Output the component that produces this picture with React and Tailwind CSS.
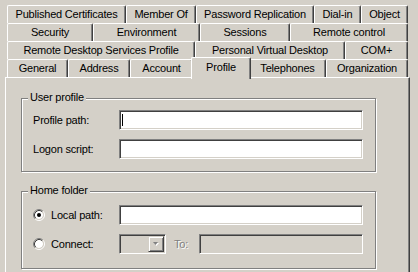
import React from 'react';

const rows = [
  [
    ['Published Certificates', 'w-[119px]'],
    ['Member Of', 'w-[70px]'],
    ['Password Replication', 'w-[118px]'],
    ['Dial-in', 'w-[47px]'],
    ['Object', 'w-[47px]'],
  ],
  [
    ['Security', 'w-[86px]'],
    ['Environment', 'w-[107px]'],
    ['Sessions', 'w-[90px]'],
    ['Remote control', 'w-[118px]'],
  ],
  [
    ['Remote Desktop Services Profile', 'w-[188px]'],
    ['Personal Virtual Desktop', 'w-[150px]'],
    ['COM+', 'w-[63px]'],
  ],
];

const Tab = ({ label, className }) => (
  <div
    className={`h-[18px] shrink-0 flex items-center justify-center border-t border-l border-white border-r border-r-[#404040] rounded-tl-[2px] rounded-tr-[2px] shadow-[inset_-1px_0_0_#808080] bg-[#d4d0c8] leading-[13px] ${className}`}
  >
    {label}
  </div>
);

const sunken =
  'border border-t-[#808080] border-l-[#808080] border-b-white border-r-white shadow-[inset_1px_1px_0_#404040,inset_-1px_-1px_0_#d4d0c8]';

const TextBox = ({ className = '', disabled, children }) => (
  <div className={`h-[20px] ${sunken} ${disabled ? 'bg-[#d4d0c8]' : 'bg-white'} relative ${className}`}>
    {children}
  </div>
);

const Radio = ({ checked }) => (
  <svg width="12" height="12" viewBox="0 0 12 12" className="shrink-0">
    <circle cx="6" cy="6" r="4" fill="#fff" />
    <path d="M2.11 9.89 A5.5 5.5 0 0 1 9.89 2.11" fill="none" stroke="#808080" />
    <path d="M9.89 2.11 A5.5 5.5 0 0 1 2.11 9.89" fill="none" stroke="#fff" />
    <path d="M2.82 9.18 A4.5 4.5 0 0 1 9.18 2.82" fill="none" stroke="#404040" />
    <path d="M9.18 2.82 A4.5 4.5 0 0 1 2.82 9.18" fill="none" stroke="#d4d0c8" />
    {checked && <circle cx="6" cy="6" r="2" fill="#000" />}
  </svg>
);

const Group = ({ title, className, children }) => (
  <div
    className={`relative w-[355px] border border-[#808080] shadow-[inset_1px_1px_0_#fff,1px_1px_0_#fff] pl-[11px] flex flex-col gap-[9px] ${className}`}
  >
    <span className="absolute left-[6px] -top-[8px] px-[2px] bg-[#d4d0c8] leading-[13px]">{title}</span>
    {children}
  </div>
);

export default function App() {
  return (
    <div className="w-[418px] h-[272px] overflow-hidden bg-[#d4d0c8] text-black text-[11px] tracking-[-0.2px] font-['Liberation_Sans',Arial,sans-serif] flex flex-col">
      <div className="pt-[5px] pl-[7px] flex flex-col">
        {rows.map((row, i) => (
          <div key={i} className="flex h-[18px]">
            {row.map(([label, w]) => (
              <Tab key={label} label={label} className={w} />
            ))}
          </div>
        ))}
        <div className="flex h-[18px] items-start">
          <Tab label="General" className="w-[61px]" />
          <Tab label="Address" className="w-[62px]" />
          <Tab label="Account" className="w-[63px]" />
          <div className="relative z-10 -mx-[2px] -mt-[2px] w-[60px] h-[22px] shrink-0 flex justify-center pt-[3px] border-t border-l border-white border-r border-r-[#404040] rounded-tl-[2px] rounded-tr-[2px] shadow-[inset_-1px_0_0_#808080] bg-[#d4d0c8] leading-[13px]">
            Profile
          </div>
          <Tab label="Telephones" className="w-[77px]" />
          <Tab label="Organization" className="w-[82px]" />
        </div>
      </div>

      <div className="ml-[5px] w-[405px] h-[210px] shrink-0 border-l border-t border-white border-r border-r-[#404040] shadow-[inset_-1px_0_0_#808080] pl-[15px] pt-[20px]">
        <Group title="User profile" className="pt-[11px] pb-[12px]">
          <div className="flex items-center">
            <span className="w-[86px]">Profile path:</span>
            <TextBox className="w-[244px]">
              <div className="absolute left-[2px] top-[3px] w-[1px] h-[12px] bg-black" />
            </TextBox>
          </div>
          <div className="flex items-center">
            <span className="w-[86px]">Logon script:</span>
            <TextBox className="w-[244px]" />
          </div>
        </Group>

        <Group title="Home folder" className="mt-[19px] pt-[13px] pb-[14px]">
          <div className="flex items-center">
            <div className="w-[86px] flex items-center gap-[6px]">
              <Radio checked />
              <span>Local path:</span>
            </div>
            <TextBox className="w-[244px]" />
          </div>
          <div className="flex items-center">
            <div className="w-[86px] flex items-center gap-[6px]">
              <Radio />
              <span>Connect:</span>
            </div>
            <TextBox disabled className="w-[47px] flex justify-end items-center pr-[1px]">
              <div className="w-[16px] h-[16px] border border-t-[#d4d0c8] border-l-[#d4d0c8] border-b-[#404040] border-r-[#404040] shadow-[inset_1px_1px_0_#fff,inset_-1px_-1px_0_#808080] flex items-center justify-center">
                <svg width="9" height="6" viewBox="0 0 9 6">
                  <path d="M2 2h5l-2.5 3z" fill="#fff" />
                  <path d="M1 1h5l-2.5 3z" fill="#808080" />
                </svg>
              </div>
            </TextBox>
            <span className="ml-[8px] w-[25px] text-[#808080] [text-shadow:1px_1px_0_#fff]">To:</span>
            <TextBox disabled className="w-[164px]" />
          </div>
        </Group>
      </div>
    </div>
  );
}
